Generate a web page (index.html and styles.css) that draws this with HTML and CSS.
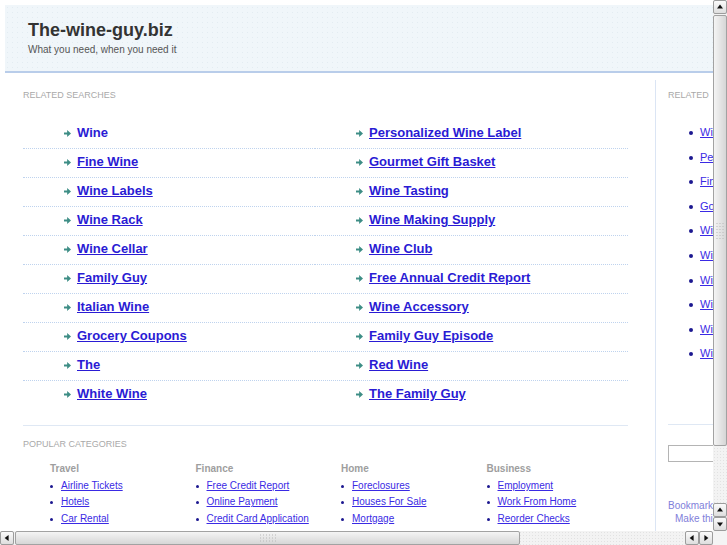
FILE: index.html
```html
<!DOCTYPE html>
<html lang="en">
<head>
<meta charset="UTF-8">
<title>The-wine-guy.biz</title>
<link rel="stylesheet" href="styles.css">
</head>
<body>

<div class="page">
  <div class="header">
    <h1 class="site-title">The-wine-guy.biz</h1>
    <div class="tagline">What you need, when you need it</div>
  </div>

  <div class="main">
    <div class="content">
      <h2 class="section-label">Related Searches</h2>
      <ul class="search-list">
        <li><a href="#" class="current">Wine</a></li>
        <li><a href="#">Personalized Wine Label</a></li>
        <li><a href="#">Fine Wine</a></li>
        <li><a href="#">Gourmet Gift Basket</a></li>
        <li><a href="#">Wine Labels</a></li>
        <li><a href="#">Wine Tasting</a></li>
        <li><a href="#">Wine Rack</a></li>
        <li><a href="#">Wine Making Supply</a></li>
        <li><a href="#">Wine Cellar</a></li>
        <li><a href="#">Wine Club</a></li>
        <li><a href="#">Family Guy</a></li>
        <li><a href="#">Free Annual Credit Report</a></li>
        <li><a href="#">Italian Wine</a></li>
        <li><a href="#">Wine Accessory</a></li>
        <li><a href="#">Grocery Coupons</a></li>
        <li><a href="#">Family Guy Episode</a></li>
        <li><a href="#">The</a></li>
        <li><a href="#">Red Wine</a></li>
        <li><a href="#">White Wine</a></li>
        <li><a href="#">The Family Guy</a></li>
      </ul>

      <div class="popular">
        <h2 class="section-label">Popular Categories</h2>
        <div class="categories">
          <div class="category">
            <h3>Travel</h3>
            <ul>
              <li><a href="#">Airline Tickets</a></li>
              <li><a href="#">Hotels</a></li>
              <li><a href="#">Car Rental</a></li>
            </ul>
          </div>
          <div class="category">
            <h3>Finance</h3>
            <ul>
              <li><a href="#">Free Credit Report</a></li>
              <li><a href="#">Online Payment</a></li>
              <li><a href="#">Credit Card Application</a></li>
            </ul>
          </div>
          <div class="category">
            <h3>Home</h3>
            <ul>
              <li><a href="#">Foreclosures</a></li>
              <li><a href="#">Houses For Sale</a></li>
              <li><a href="#">Mortgage</a></li>
            </ul>
          </div>
          <div class="category">
            <h3>Business</h3>
            <ul>
              <li><a href="#">Employment</a></li>
              <li><a href="#">Work From Home</a></li>
              <li><a href="#">Reorder Checks</a></li>
            </ul>
          </div>
        </div>
      </div>
    </div>

    <div class="sidebar">
      <h2 class="section-label">Related</h2>
      <ul class="side-list">
        <li><a href="#">Wine</a></li>
        <li><a href="#">Personalized Wine Label</a></li>
        <li><a href="#">Fine Wine</a></li>
        <li><a href="#">Gourmet Gift Basket</a></li>
        <li><a href="#">Wine Tasting</a></li>
        <li><a href="#">Wine Labels</a></li>
        <li><a href="#">Wine Making Supply</a></li>
        <li><a href="#">Wine Rack</a></li>
        <li><a href="#">Wine Club</a></li>
        <li><a href="#">Wine Cellar</a></li>
      </ul>
      <div class="search-box">
        <input type="text" class="search-input">
      </div>
      <div class="bookmark">Bookmark this page</div>
      <div class="homepage">Make this your homepage</div>
    </div>
  </div>
</div>

<!-- browser scrollbars as they appear in the screenshot -->
<div class="vscroll">
  <div class="sb-btn up"></div>
  <div class="sb-thumb"></div>
  <div class="sb-track"></div>
  <div class="sb-btn up"></div>
  <div class="sb-btn down"></div>
</div>
<div class="hscroll">
  <div class="sb-btn left"></div>
  <div class="sb-thumb"></div>
  <div class="sb-track"></div>
  <div class="sb-btn left"></div>
  <div class="sb-btn right"></div>
</div>
<div class="sb-corner"></div>

</body>
</html>
```

FILE: styles.css
```css
html, body {
  margin: 0;
  padding: 0;
  overflow: hidden;
  background: #fff;
  font-family: "Liberation Sans", Arial, sans-serif;
}
.page {
  width: 920px;
  padding: 5px 0 0 5px;
}
.header {
  height: 68px;
  box-sizing: border-box;
  padding: 14px 23px 0;
  background-color: #f0f6fa;
  background-image: radial-gradient(#e3ecf2 0.7px, transparent 0.9px);
  background-size: 5px 5px;
  border-bottom: 2px solid #b9cdea;
}
.site-title {
  margin: 0;
  font-size: 18px;
  line-height: 22px;
  font-weight: bold;
  color: #333;
}
.tagline {
  margin-top: 2px;
  font-size: 10px;
  line-height: 14px;
  color: #555;
}
.main {
  display: flex;
  margin-top: 7px;
}
.content {
  flex: none;
  width: 651px;
  min-height: 480px;
  box-sizing: border-box;
  padding: 9px 0 0 18px;
  border-right: 1px solid #dbe5f4;
}
.section-label {
  margin: 0;
  font-size: 9px;
  line-height: 12px;
  font-weight: normal;
  text-transform: uppercase;
  color: #a9a9a9;
}

/* related searches grid */
.search-list {
  list-style: none;
  margin: 19px 0 0;
  padding: 0;
  width: 605px;
  display: grid;
  grid-template-columns: 292px 313px;
}
.search-list li {
  height: 29px;
  box-sizing: border-box;
  line-height: 26px;
  padding-left: 40px;
  border-bottom: 1px dotted #bfd3ee;
  font-size: 13px;
  font-weight: bold;
}
.search-list li:nth-last-child(-n+2) {
  border-bottom: none;
}
.search-list li::before {
  content: "";
  display: inline-block;
  width: 7px;
  height: 7px;
  margin-left: 1px;
  margin-right: 6px;
  vertical-align: middle;
  background: #3d8d85;
  clip-path: polygon(0 35%, 45% 35%, 45% 0, 100% 50%, 45% 100%, 45% 65%, 0 65%);
}
.search-list a {
  color: #2a1bd4;
}
.search-list a.current {
  text-decoration: none;
}

/* popular categories */
.popular {
  width: 605px;
  margin-top: 15px;
  padding-top: 12px;
  border-top: 1px solid #dfe8f4;
}
.categories {
  display: grid;
  grid-template-columns: repeat(4, 145.5px);
  margin: 12px 0 0 27px;
}
.category h3 {
  margin: 0 0 2px;
  font-size: 10px;
  line-height: 14px;
  font-weight: bold;
  color: #9e9e9e;
}
.category ul {
  list-style: none;
  margin: 0;
  padding: 0;
}
.category li {
  font-size: 10px;
  line-height: 16.4px;
  white-space: nowrap;
}
.category li::before,
.side-list li::before {
  content: "";
  display: inline-block;
  width: 3px;
  height: 3px;
  margin-right: 8px;
  border-radius: 50%;
  vertical-align: middle;
  background: #1c1890;
}
.category a {
  color: #3a2ae4;
}

/* right column */
.sidebar {
  flex: none;
  width: 250px;
  padding: 9px 0 0 12px;
}
.side-list {
  list-style: none;
  margin: 19px 0 0;
  padding: 0 0 58px 21px;
  height: 246px;
  border-bottom: 1px solid #dfe8f4;
}
.side-list li {
  font-size: 11px;
  line-height: 24.6px;
  white-space: nowrap;
}
.side-list li::before {
  width: 4px;
  height: 4px;
  margin-right: 7px;
}
.side-list a {
  color: #3a2ae4;
}
.search-box {
  margin-top: 20px;
}
.search-input {
  display: block;
  width: 160px;
  height: 17px;
  box-sizing: border-box;
  border: 1px solid #b4b4b4;
  padding: 0;
}
.bookmark,
.homepage {
  font-size: 10px;
  line-height: 13px;
  color: #7f80da;
  white-space: nowrap;
}
.bookmark {
  margin-top: 37px;
}
.homepage {
  padding-left: 7px;
}

/* scrollbars */
.vscroll,
.hscroll {
  position: fixed;
  display: flex;
  background-color: #f3f3f3;
  background-image: radial-gradient(#e2e2e2 0.6px, transparent 0.8px);
  background-size: 3px 3px;
}
.vscroll {
  top: 0;
  right: 0;
  width: 14px;
  height: 531px;
  flex-direction: column;
}
.hscroll {
  left: 0;
  bottom: 0;
  width: 713px;
  height: 14px;
}
.sb-corner {
  position: fixed;
  right: 0;
  bottom: 0;
  width: 14px;
  height: 14px;
  background: #f4f4f4;
}
.sb-btn {
  position: relative;
  flex: none;
  width: 14px;
  height: 14px;
  box-sizing: border-box;
  border: 1px solid #9c9c9c;
  border-radius: 2px;
  background: linear-gradient(#fbfbfb, #dedede);
}
.sb-btn::before {
  content: "";
  position: absolute;
  left: 50%;
  top: 50%;
  border: 3px solid transparent;
}
.sb-btn.up::before {
  border-bottom: 4px solid #111;
  border-top: none;
  transform: translate(-50%, -60%);
}
.sb-btn.down::before {
  border-top: 4px solid #111;
  border-bottom: none;
  transform: translate(-50%, -40%);
}
.sb-btn.left::before {
  border-right: 4px solid #111;
  border-left: none;
  transform: translate(-60%, -50%);
}
.sb-btn.right::before {
  border-left: 4px solid #111;
  border-right: none;
  transform: translate(-40%, -50%);
}
.sb-thumb {
  position: relative;
  flex: none;
  box-sizing: border-box;
  border: 1px solid #a2a2a2;
  border-radius: 2px;
}
.vscroll .sb-thumb {
  margin-top: 1px;
  height: 431px;
  background: linear-gradient(90deg, #f4f4f4, #d6d6d6);
}
.hscroll .sb-thumb {
  margin-left: 1px;
  width: 505px;
  background: linear-gradient(#f4f4f4, #d6d6d6);
}
.sb-thumb::after {
  content: "";
  position: absolute;
  left: 50%;
  top: 50%;
  transform: translate(-50%, -50%);
  background-image: radial-gradient(#b8b8b8 0.7px, transparent 0.9px);
  background-size: 3px 3px;
}
.vscroll .sb-thumb::after {
  width: 9px;
  height: 18px;
}
.hscroll .sb-thumb::after {
  width: 18px;
  height: 9px;
}
.sb-track {
  flex: 1;
}
```
